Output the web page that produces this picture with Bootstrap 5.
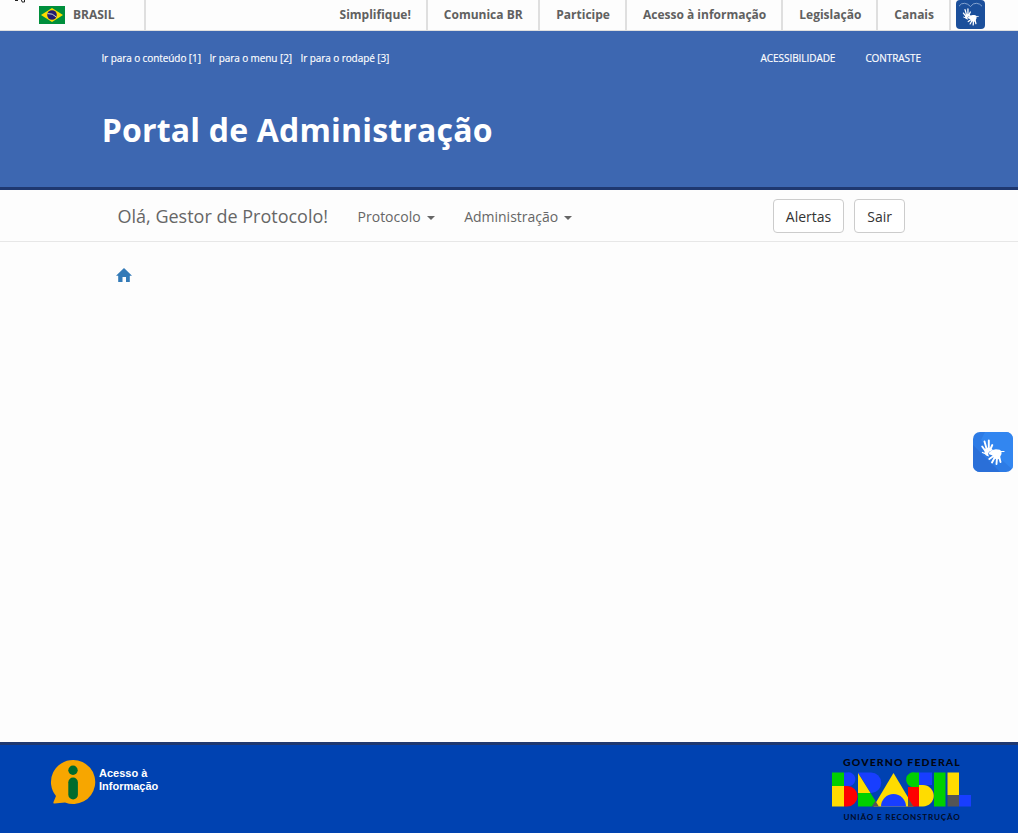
<!DOCTYPE html>
<html lang="pt-BR">
<head>
<meta charset="utf-8">
<meta name="viewport" content="width=device-width, initial-scale=1">
<title>Portal de Administração</title>
<link href="https://cdn.jsdelivr.net/npm/bootstrap@5.3.0/dist/css/bootstrap.min.css" rel="stylesheet">
<style>
body{font-family:"Open Sans",sans-serif;font-size:14px;line-height:20px;background:#fdfdfd;color:#333;height:833px;overflow:hidden}
a{text-decoration:none}
.gov-bar{height:31px;border-bottom:1px solid #dfdfdf;font-size:12px;font-weight:700;padding-left:39px;padding-right:33px}
.gov-bar a{color:#606060;line-height:29px}
.gov-brand{width:107px;border-right:2px solid #dfdfdf;padding-bottom:1px}
.gov-links a{border-right:2px solid #dfdfdf;padding:0 15px 0 16px;white-space:nowrap}
.gov-links a:nth-child(2){padding-right:15.7px}
.corner-mark{left:14px;top:0}
.portal-head{height:159px;background:#3d67b1;border-bottom:3px solid #1f3870;padding:0 97px 0 101.4px}
.portal-head a{color:#fff;font-size:10px;line-height:14px;letter-spacing:-.08px;-webkit-text-stroke:.15px #fff}
.skip-links{gap:8.5px}
.tool-links{gap:30px}
.tool-links a{letter-spacing:-.06px}
.portal-head h1{font-size:32px;line-height:40px;font-weight:700;letter-spacing:.18px;margin:45px 0 0 .4px;color:#fff}
.user-nav{height:52px;border-bottom:1px solid #e7e7e7;padding:0 113px 0 117px}
.user-nav .hello{font-size:18px;color:#666;padding-left:.5px;margin-right:29.5px}
.user-nav .menu-link{color:#666;padding-top:2px}
.user-nav .menu-link + .menu-link{margin-left:29.5px}
.user-nav .menu-link::after{vertical-align:2px;margin-left:6px;border-top-width:4px;border-left-width:4px;border-right-width:4px}
.menu-actions{gap:10px}
.btn-portal{font-size:14px;line-height:20px;padding:7px 12px 5px;border:1px solid #ccc;border-radius:4px;color:#333;background:#fff}
.crumb{padding:25px 0 0 116px}
.portal-foot{height:91px;background:#0042b1;border-top:3px solid #1f3870;padding:0 46px 0 50px}
.foot-info{font:bold 11px/13px "Liberation Sans",sans-serif;color:#fff;margin:22px 0 0 3px}
.info-mark{margin-top:14px}
.brand-mark{margin-top:10px}
.libras-small{margin-left:5px}
.vlibras{right:5px;top:432px;width:40px;height:40px;border-radius:7px}
</style>
</head>
<body class="d-flex flex-column position-relative">
<svg width="0" height="0" class="position-absolute">
<defs><g id="hands" fill="none" stroke="#fff" stroke-linecap="round" stroke-linejoin="round">
<path fill="#fff" stroke="none" d="M12 17Q14 15 18 16.5L20 18 16.5 19.5 15 21.5 16 24.5Q12.5 24 11.5 21Z"/>
<path stroke-width="1.9" d="M12.8 19.5L9.2 14.5M13.8 17.5L11.5 9.5M15.8 17L15.8 8.5M17.3 17.5L19.3 13"/>
<path stroke-width="1.3" d="M13 22L9.5 20.5"/>
<path fill="#fff" stroke="none" d="M16.5 20Q20 16.5 25 17.5Q29 17.5 28.5 22L26 27Q21 28 19.5 23.5L15.5 22Z"/>
<path stroke-width="1.9" d="M20.5 24L16.3 27M22 25L19 30.5M24 25.5L23.5 32M26 24L27.5 30"/><path stroke-width="1.2" d="M28 19.5L31 19.5"/>
</g></defs></svg>
<svg class="corner-mark position-absolute" width="13" height="4" viewBox="0 0 13 4" aria-hidden="true"><path d="M1 .5h3M7 0l1 .8v1.2h2.5V0" fill="none" stroke="#222" stroke-width="1"/></svg>
<header class="gov-bar d-flex">
<a href="#" class="gov-brand d-flex align-items-center">
<svg width="26" height="18" viewBox="0 0 26 18"><path fill="#008f3c" d="M0 0h26v18H0z"/><path fill="#fedc00" d="M13 2L24 9 13 16 2 9z"/><circle cx="13" cy="9" r="4.8" fill="#241c70"/><path d="M8.5 7.6Q13.5 7 17.3 11" fill="none" stroke="#c9d4d0" stroke-width="1"/></svg>
<span class="ms-2">BRASIL</span></a>
<nav class="gov-links d-flex ms-auto"><a href="#">Simplifique!</a><a href="#">Comunica BR</a><a href="#">Participe</a><a href="#">Acesso à informação</a><a href="#">Legislação</a><a href="#">Canais</a></nav>
<svg class="libras-small" width="29" height="29" viewBox="0 0 29 29"><rect width="29" height="29" rx="4" fill="#1b4f9b"/><path d="M3 6.2Q5 3 8.5 3.3T14.5 6.5Q17 3 20.5 3.3T26 6.2" fill="none" stroke="#9eb7dc" stroke-width=".8"/><use href="#hands" transform="translate(1.2 3.2) scale(.68)"/></svg>
</header>
<section class="portal-head">
<div class="d-flex justify-content-between pt-3"><nav class="skip-links d-flex pt-1"><a href="#">Ir para o conteúdo [1]</a><a href="#">Ir para o menu [2]</a><a href="#">Ir para o rodapé [3]</a></nav><nav class="tool-links d-flex pt-1"><a href="#">ACESSIBILIDADE</a><a href="#">CONTRASTE</a></nav></div>
<h1>Portal de Administração</h1>
</section>
<nav class="user-nav d-flex align-items-center">
<a href="#" class="hello">Olá, Gestor de Protocolo!</a>
<a href="#" class="menu-link dropdown-toggle">Protocolo</a>
<a href="#" class="menu-link dropdown-toggle">Administração</a>
<div class="menu-actions d-flex ms-auto"><button class="btn btn-portal">Alertas</button><button class="btn btn-portal">Sair</button></div>
</nav>
<main class="flex-grow-1"><div class="crumb"><a href="#" aria-label="Início"><svg class="d-block" width="16" height="16" viewBox="0 0 16 16"><path fill="#337ab7" d="M8 1L16 8.8H13.8V15H10V10H6.5V15H2.2V8.8H0z"/></svg></a></div></main>
<footer class="portal-foot d-flex justify-content-between">
<div class="d-flex">
<svg class="info-mark" width="46" height="46" viewBox="0 0 46 46"><path fill="#f7a600" d="M23 1a22 22 0 1 1-8 42.4L4.5 44.5Q3 44.5 3.5 43L6 37A22 22 0 0 1 23 1z"/><circle cx="23" cy="11.2" r="4.7" fill="#006b2d"/><rect x="18.3" y="18.5" width="9.6" height="22" rx="4.8" fill="#006b2d"/></svg>
<div class="foot-info">Acesso à<br>Informação</div></div>
<svg class="brand-mark" width="142" height="70" viewBox="830 755 142 70">
<text x="843" y="766" textLength="118" lengthAdjust="spacingAndGlyphs" letter-spacing="1" font-family="Lato" font-weight="900" font-size="9" fill="#020611">GOVERNO FEDERAL</text>
<g>
<path fill="#00d000" d="M832 772.5h12V786h-12z"/><path fill="#183eff" d="M844 772.5h3a6.7 6.7 0 0 1 3 13.5h-6z"/><path fill="#ffdc00" d="M832 786h12v20.5h-12z"/><path fill="#f00" d="M844 786h3.3a10.25 10.25 0 0 1 0 20.5h-3.3z"/>
<path fill="#183eff" d="M858 772.5h13a10.25 10.25 0 0 1 0 20.5z"/><path fill="#ffdc00" d="M858 773l12.5 20H858z"/><path fill="#00d000" d="M858 793h12.5l5 8-3.5 5.5H858z"/>
<path fill="#ffdc00" d="M893.5 773l20 33.5h-40z"/><path fill="#555" d="M875.5 801l3.3 5.5h-6.8z"/><path fill="#183eff" d="M881 806.5a12.5 12.5 0 0 1 25 0z"/>
<path fill="#00d000" d="M919 772.5V787h-7a7.2 7.2 0 0 1 3-14.5z"/><path fill="#183eff" d="M919 772.5h13V785h-13z"/><path fill="#f00" d="M908 787h11v19.5h-11z"/><path fill="#555" d="M908 798l5.5 8.5H908z"/><path fill="#ffdc00" d="M919 785h4a10.75 10.75 0 0 1 0 21.5h-4z"/>
<path fill="#00d000" d="M934 772.5h11.5v34H934z"/><path fill="#ffdc00" d="M947.5 772.5H959V795h-11.5z"/><path fill="#555" d="M947.5 795H959v11.5h-11.5z"/><path fill="#183eff" d="M959 795h12v11.5h-12z"/>
</g>
<text x="843.5" y="819.5" textLength="117" lengthAdjust="spacingAndGlyphs" letter-spacing=".8" font-family="Lato" font-weight="700" font-size="7.8" fill="#020b26">UNIÃO E RECONSTRUÇÃO</text>
</svg>
</footer>
<svg class="vlibras position-absolute" viewBox="0 0 40 40"><rect width="40" height="40" fill="#2d7be5"/><path fill="#3286f0" d="M12 0H40V38L20 20 8 8z"/><path fill="#2a6fd8" d="M0 13L27 40H0z"/><use href="#hands"/></svg>
<script src="https://cdn.jsdelivr.net/npm/bootstrap@5.3.0/dist/js/bootstrap.bundle.min.js"></script>
</body>
</html>
